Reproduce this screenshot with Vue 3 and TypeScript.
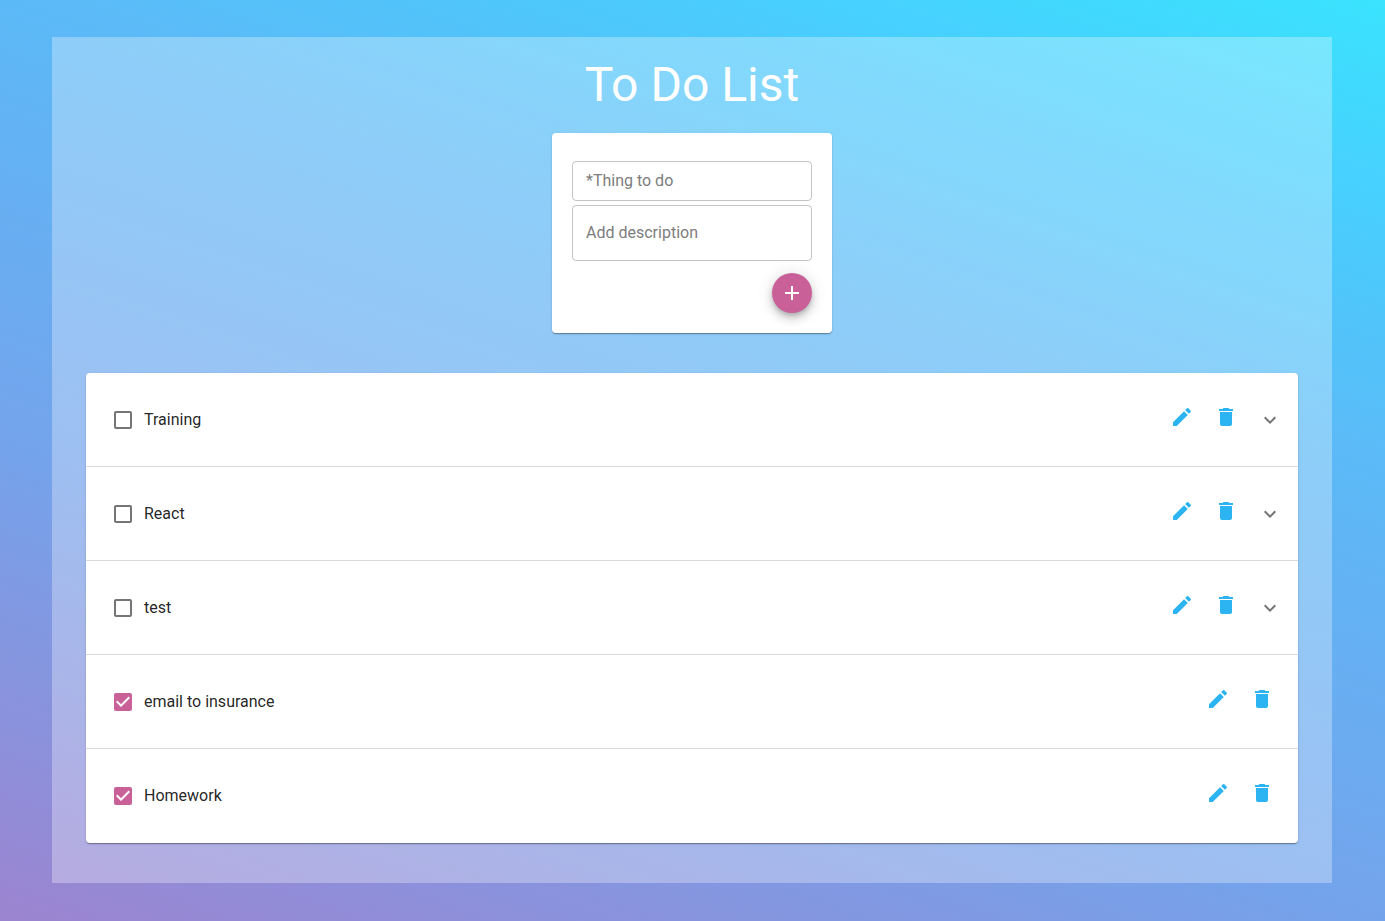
<script setup lang="ts">
import { ref } from 'vue'

interface Todo {
  id: number
  title: string
  done: boolean
  expandable: boolean
}

const thing = ref('')
const description = ref('')
const todos = ref<Todo[]>([
  { id: 1, title: 'Training', done: false, expandable: true },
  { id: 2, title: 'React', done: false, expandable: true },
  { id: 3, title: 'test', done: false, expandable: true },
  { id: 4, title: 'email to insurance', done: true, expandable: false },
  { id: 5, title: 'Homework', done: true, expandable: false },
])

function addTodo() {
  if (!thing.value.trim()) return
  todos.value.push({
    id: Date.now(),
    title: thing.value,
    done: false,
    expandable: description.value.trim() !== '',
  })
  thing.value = ''
  description.value = ''
}

function removeTodo(id: number) {
  todos.value = todos.value.filter((todo) => todo.id !== id)
}
</script>

<template>
  <div class="page">
    <main class="panel">
      <h1 class="heading">To Do List</h1>

      <form class="card form" @submit.prevent="addTodo">
        <input v-model="thing" class="field" type="text" placeholder="*Thing to do" aria-label="Thing to do" />
        <input
          v-model="description"
          class="field tall"
          type="text"
          placeholder="Add description"
          aria-label="Add description"
        />
        <button class="add" type="submit" aria-label="Add">
          <svg viewBox="0 0 24 24"><path d="M19 13h-6v6h-2v-6H5v-2h6V5h2v6h6v2z" /></svg>
        </button>
      </form>

      <ul class="card list">
        <li v-for="todo in todos" :key="todo.id" class="row">
          <label class="item">
            <input v-model="todo.done" class="check" type="checkbox" />
            <svg class="box" :class="{ checked: todo.done }" viewBox="0 0 24 24" aria-hidden="true">
              <path
                v-if="todo.done"
                d="M19 3H5c-1.11 0-2 .9-2 2v14c0 1.1.89 2 2 2h14c1.11 0 2-.9 2-2V5c0-1.1-.89-2-2-2zm-9 14l-5-5 1.41-1.41L10 14.17l7.59-7.59L19 8l-9 9z"
              />
              <path
                v-else
                d="M19 5v14H5V5h14m0-2H5c-1.1 0-2 .9-2 2v14c0 1.1.9 2 2 2h14c1.1 0 2-.9 2-2V5c0-1.1-.9-2-2-2z"
              />
            </svg>
            <span>{{ todo.title }}</span>
          </label>
          <div class="actions">
            <button class="icon" type="button" :aria-label="`Edit ${todo.title}`">
              <svg viewBox="0 0 24 24">
                <path
                  d="M3 17.25V21h3.75L17.81 9.94l-3.75-3.75L3 17.25zM20.71 7.04c.39-.39.39-1.02 0-1.41l-2.34-2.34a.9959.9959 0 0 0-1.41 0l-1.83 1.83 3.75 3.75 1.83-1.83z"
                />
              </svg>
            </button>
            <button class="icon" type="button" :aria-label="`Delete ${todo.title}`" @click="removeTodo(todo.id)">
              <svg viewBox="0 0 24 24">
                <path d="M6 19c0 1.1.9 2 2 2h8c1.1 0 2-.9 2-2V7H6v12zM19 4h-3.5l-1-1h-5l-1 1H5v2h14V4z" />
              </svg>
            </button>
          </div>
          <button v-if="todo.expandable" class="expand" type="button" :aria-label="`Expand ${todo.title}`">
            <svg viewBox="0 0 24 24"><path d="M16.59 8.59L12 13.17 7.41 8.59 6 10l6 6 6-6z" /></svg>
          </button>
        </li>
      </ul>
    </main>
  </div>
</template>

<style>
body {
  margin: 0;
}
</style>

<style scoped>
.page {
  box-sizing: border-box;
  min-height: 100vh;
  padding: 37px 53px 38px 52px;
  background: linear-gradient(199deg, #3ae3fe 0%, #4accfd 17%, #5cb9f7 34%, #74a3eb 66%, #9c84d0 100%);
  color: rgba(0, 0, 0, 0.87);
  font-family: Roboto, 'Liberation Sans', sans-serif;
  font-size: 16px;
  line-height: 24px;
}

.panel {
  display: flex;
  flex-direction: column;
  align-items: center;
  padding: 20px 34px 40px;
  background: rgba(255, 255, 255, 0.3);
}

.heading {
  margin: 0 0 20px;
  color: #fff;
  font-size: 48px;
  font-weight: 400;
  line-height: 56px;
}

.card {
  box-sizing: border-box;
  border-radius: 4px;
  background: #fff;
  box-shadow:
    0 2px 1px -1px rgba(0, 0, 0, 0.2),
    0 1px 1px 0 rgba(0, 0, 0, 0.14),
    0 1px 3px 0 rgba(0, 0, 0, 0.12);
}

.form {
  display: flex;
  flex-direction: column;
  gap: 4px;
  width: 280px;
  padding: 28px 20px 20px;
}

.field {
  box-sizing: border-box;
  width: 100%;
  height: 40px;
  padding: 0 13px 2px;
  border: 1px solid rgba(0, 0, 0, 0.23);
  border-radius: 4px;
  background: transparent;
  color: inherit;
  font: inherit;
}

.field::placeholder {
  color: #7d7d7d;
  opacity: 1;
}

.tall {
  height: 56px;
}

button {
  display: flex;
  padding: 0;
  border: 0;
  background: none;
  cursor: pointer;
}

svg {
  display: block;
  width: 24px;
  height: 24px;
  fill: currentColor;
}

.add {
  align-items: center;
  align-self: flex-end;
  justify-content: center;
  width: 40px;
  height: 40px;
  margin-top: 8px;
  border-radius: 50%;
  background: #c96198;
  color: #fff;
  box-shadow:
    0 3px 5px -1px rgba(0, 0, 0, 0.2),
    0 6px 10px 0 rgba(0, 0, 0, 0.14),
    0 1px 18px 0 rgba(0, 0, 0, 0.12);
}

.list {
  width: 100%;
  margin: 40px 0 0;
  padding: 0;
  list-style: none;
}

.row {
  display: flex;
  align-items: center;
  box-sizing: border-box;
  height: 94px;
  padding: 0 16px 0 25px;
  border-bottom: 1px solid #dadada;
}

.row:last-child {
  border-bottom-color: transparent;
}

.item {
  display: flex;
  flex: 1;
  align-items: center;
  gap: 9px;
}

.check {
  position: absolute;
  width: 24px;
  height: 24px;
  margin: 0;
  opacity: 0;
}

.box {
  color: #757575;
}

.checked {
  color: #c96198;
}

.actions {
  display: flex;
  gap: 20px;
  padding: 0 8px 6px;
}

.icon {
  color: #2bb4f1;
}

.expand {
  margin-left: 12px;
  color: #757575;
}
</style>
